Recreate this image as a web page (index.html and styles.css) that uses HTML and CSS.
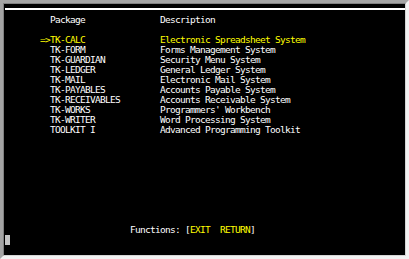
FILE: index.html
```
<!DOCTYPE html>
<html>
<head>
<meta charset="utf-8">
<link rel="stylesheet" href="styles.css">
</head>
<body>
<div class="frame">
  <div class="screen">
    <div class="rule"></div>
    <div class="content">
      <div class="row head">
        <span class="mark"></span><span class="name">Package</span><span class="desc">Description</span>
      </div>
      <div class="row blank"></div>
      <div class="row sel">
        <span class="mark">=&gt;</span><span class="name">TK-CALC</span><span class="desc">Electronic Spreadsheet System</span>
      </div>
      <div class="row"><span class="mark"></span><span class="name">TK-FORM</span><span class="desc">Forms Management System</span></div>
      <div class="row"><span class="mark"></span><span class="name">TK-GUARDIAN</span><span class="desc">Security Menu System</span></div>
      <div class="row"><span class="mark"></span><span class="name">TK-LEDGER</span><span class="desc">General Ledger System</span></div>
      <div class="row"><span class="mark"></span><span class="name">TK-MAIL</span><span class="desc">Electronic Mail System</span></div>
      <div class="row"><span class="mark"></span><span class="name">TK-PAYABLES</span><span class="desc">Accounts Payable System</span></div>
      <div class="row"><span class="mark"></span><span class="name">TK-RECEIVABLES</span><span class="desc">Accounts Receivable System</span></div>
      <div class="row"><span class="mark"></span><span class="name">TK-WORKS</span><span class="desc">Programmers' Workbench</span></div>
      <div class="row"><span class="mark"></span><span class="name">TK-WRITER</span><span class="desc">Word Processing System</span></div>
      <div class="row"><span class="mark"></span><span class="name">TOOLKIT I</span><span class="desc">Advanced Programming Toolkit</span></div>
      <div class="functions">Functions: [<span class="key">EXIT</span>  <span class="key">RETURN</span>]</div>
      <div class="cursor"></div>
    </div>
  </div>
</div>
</body>
</html>
```
FILE: styles.css
```
html, body {
  margin: 0;
  padding: 0;
  background: #000;
}
.frame {
  box-sizing: border-box;
  width: 409px;
  height: 259px;
  border-style: solid;
  border-width: 3px;
  border-color: #a4a4a4 #f2f2f2 #f2f2f2 #a4a4a4;
  overflow: hidden;
}
.screen {
  box-sizing: border-box;
  height: 100%;
  border-style: solid;
  border-width: 1px;
  border-color: #808080 #d4d4d4 #d4d4d4 #808080;
  background: #000;
  display: flex;
  flex-direction: column;
}
.rule {
  flex-shrink: 0;
  height: 2px;
  margin: 4px 0 0 1px;
  background: #fff;
}
.content {
  padding: 5px 0 0 1px;
  font-family: "DejaVu Sans Mono", "Liberation Mono", monospace;
  font-size: 9.5px;
  letter-spacing: -0.72px;
  line-height: 10px;
  color: #fff;
}
.row {
  display: grid;
  grid-template-columns: 45px 110px 1fr;
  height: 10px;
  white-space: nowrap;
}
.mark {
  justify-self: end;
}
.sel {
  color: #ffff00;
}
.functions {
  margin-top: 90px;
  padding-left: 125px;
  height: 10px;
  white-space: pre;
}
.key {
  color: #ffff00;
}
.cursor {
  width: 5px;
  height: 10px;
  background: #c4c4c4;
}
```
